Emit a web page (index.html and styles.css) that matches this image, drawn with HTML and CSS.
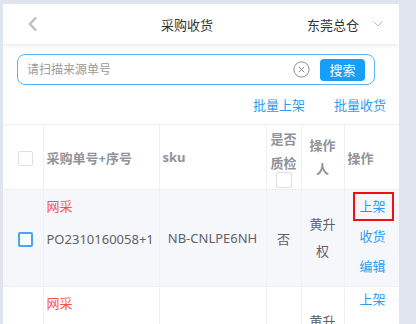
FILE: index.html
```html
<!DOCTYPE html>
<html>
<head>
    <title>采购收货</title>
    <link rel="stylesheet" href="styles.css">
</head>
<body>
    <div class="page">
        <div class="topbar">
            <div class="back">
                <svg width="12" height="16" viewBox="0 0 12 16"><path d="M9 1.5 L3 8 L9 14.5" fill="none" stroke="#bdbdbd" stroke-width="2.4"/></svg>
            </div>
            <div class="title">采购收货</div>
            <div class="store">
                <span>东莞总仓</span>
                <svg width="12" height="8" viewBox="0 0 12 8"><path d="M1.5 1.5 L6 6 L10.5 1.5" fill="none" stroke="#b8b8b8" stroke-width="1"/></svg>
            </div>
        </div>

        <div class="search-wrap">
            <div class="search-box">
                <input type="text" placeholder="请扫描来源单号">
                <svg class="clear" width="17" height="17" viewBox="0 0 17 17"><circle cx="8.5" cy="8.5" r="7.6" fill="none" stroke="#8a8a8a" stroke-width="1"/><path d="M5.8 5.8 L11.2 11.2 M11.2 5.8 L5.8 11.2" stroke="#8a8a8a" stroke-width="1"/></svg>
                <button class="search-btn">搜索</button>
            </div>
        </div>

        <div class="batch">
            <a href="#">批量上架</a>
            <a href="#">批量收货</a>
        </div>

        <table class="grid">
            <colgroup>
                <col style="width: 40px">
                <col style="width: 116px">
                <col style="width: 107px">
                <col style="width: 35px">
                <col style="width: 43px">
                <col style="width: 55px">
            </colgroup>
            <thead>
                <tr>
                    <th class="c-check"><span class="box"></span></th>
                    <th>采购单号+序号</th>
                    <th>sku</th>
                    <th class="c-center c-qc">是否质检<span class="box"></span></th>
                    <th class="c-center c-user">操作人</th>
                    <th>操作</th>
                </tr>
            </thead>
            <tbody>
                <tr class="odd">
                    <td class="c-check"><span class="box on"></span></td>
                    <td class="c-order"><div class="tag">网采</div><div>PO2310160058+1</div></td>
                    <td class="c-center">NB-CNLPE6NH</td>
                    <td class="c-center">否</td>
                    <td class="c-center c-user">黄升权</td>
                    <td class="c-ops">
                        <a href="#" class="picked">上架</a>
                        <a href="#">收货</a>
                        <a href="#">编辑</a>
                    </td>
                </tr>
                <tr>
                    <td class="c-check"></td>
                    <td class="c-order"><div class="tag">网采</div></td>
                    <td class="c-center"></td>
                    <td class="c-center"></td>
                    <td class="c-center c-user"><div class="peek">黄升</div></td>
                    <td class="c-ops">
                        <a href="#">上架</a>
                    </td>
                </tr>
            </tbody>
        </table>
    </div>
</body>
</html>
```

FILE: styles.css
```css
html, body {
    margin: 0;
    height: 100%;
    overflow: hidden;
}
body {
    background: #dfe4ef;
    font-family: "Noto Sans", "Noto Sans CJK SC", sans-serif;
    font-size: 13px;
    color: #606266;
}
.page {
    width: 396px;
    margin: 4px 0 0 3px;
    height: 320px;
    overflow: hidden;
    background: white;
}
.topbar {
    height: 40px;
    display: flex;
    align-items: center;
    background: white;
    box-shadow: 0 2px 4px rgba(0,0,0,0.08);
    position: relative;
}
.back {
    width: 64px;
    padding-left: 24px;
    box-sizing: border-box;
    display: flex;
    align-items: center;
}
.title {
    flex: 1;
    text-align: center;
    color: #333;
}
.store {
    width: 92px;
    display: flex;
    align-items: center;
    color: #333;
}
.store svg {
    margin-left: 13px;
}
.search-wrap {
    padding: 10px 24px 0 14px;
}
.search-box {
    height: 31px;
    box-sizing: border-box;
    border: 1px solid #5ab2f4;
    border-radius: 8px;
    display: flex;
    align-items: center;
    padding: 0 9px 0 9px;
}
.search-box input {
    flex: 1;
    border: none;
    outline: none;
    font-family: inherit;
    font-size: 12px;
    color: #606266;
    padding: 0;
    background: transparent;
}
.search-box input::placeholder {
    color: #9a9a9a;
}
.clear {
    margin-right: 10px;
}
.search-btn {
    width: 45px;
    height: 22px;
    border: none;
    border-radius: 4px;
    background: #189ef7;
    color: white;
    font-family: inherit;
    font-size: 13px;
    padding: 0;
}
.batch {
    display: flex;
    justify-content: flex-end;
    gap: 29px;
    padding: 8px 13px 0 0;
    line-height: 24px;
}
.batch a, .c-ops a {
    color: #2d9bf3;
    text-decoration: none;
}
.grid {
    margin-top: 7px;
    width: 396px;
    table-layout: fixed;
    border-collapse: collapse;
    border-top: 1px solid #eef0f5;
}
.grid th, .grid td {
    border-right: 1px solid #eef0f5;
    border-bottom: 1px solid #eef0f5;
    padding: 0 3px;
    text-align: left;
}
.grid th:last-child, .grid td:last-child {
    border-right: none;
}
.grid th {
    height: 64px;
    color: #909399;
    font-weight: bold;
}
.grid td {
    height: 96px;
}
.grid .odd td {
    background: #f5f7fb;
}
.grid .c-check {
    padding-left: 15px;
}
.grid .c-center {
    text-align: center;
}
.box {
    display: inline-block;
    width: 15px;
    height: 15px;
    box-sizing: border-box;
    border: 1px solid #dcdfe6;
    border-radius: 2px;
    background: white;
    vertical-align: middle;
}
.box.on {
    border: 2px solid #4aa3f6;
}
.c-qc {
    line-height: 24px;
}
.c-qc .box {
    display: block;
    width: 16px;
    height: 16px;
    margin: -3px auto 0;
}
.grid .c-user {
    padding: 0 6px;
    line-height: 24px;
}
.grid td.c-user {
    line-height: 27px;
    vertical-align: top;
}
.c-user .peek {
    margin-top: 21px;
}
.grid td.c-order {
    vertical-align: top;
    line-height: 33px;
}
.tag {
    color: #f5553f;
}
.grid td.c-ops {
    vertical-align: top;
    padding: 0;
}
.c-ops a {
    display: block;
    width: fit-content;
    margin: 0 0 6px 8px;
    padding: 0 8px 0 7px;
    line-height: 24px;
}
.c-ops a.picked {
    margin: 2px 0 3px 8px;
    padding: 0 6px 0 5px;
    border: 2px solid #f01010;
    line-height: 25px;
}
.odd td.c-user {
    vertical-align: middle;
}
```
